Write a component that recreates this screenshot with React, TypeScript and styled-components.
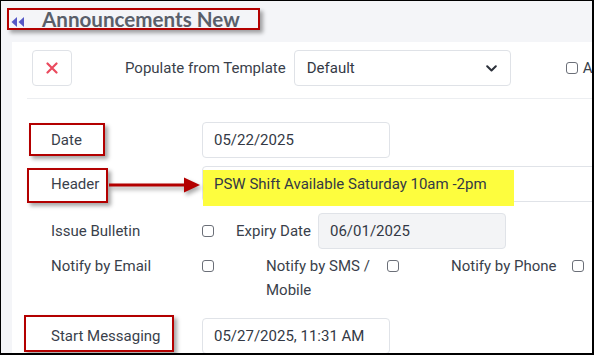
import React from "react";
import styled, { createGlobalStyle } from "styled-components";

const Global = createGlobalStyle`
  html, body { margin: 0; padding: 0; background: #fff; overflow: hidden; }
  * { box-sizing: border-box; }
`;

const Frame = styled.div`
  position: relative;
  width: 594px;
  height: 355px;
  border-top: 1px solid #000;
  border-left: 1px solid #000;
  border-right: 2px solid #000;
  border-bottom: 2px solid #000;
  overflow: hidden;
  background: #f4f5f8;
  font-family: Roboto, "Liberation Sans", sans-serif;
  font-size: 15px;
  color: #3a3f4b;
  display: flex;
  flex-direction: column;
`;

const TitleBar = styled.div`
  height: 41px;
  flex: none;
  display: flex;
  align-items: center;
  padding-left: 10px;
  gap: 17px;
`;

const Title = styled.h1`
  margin: 0;
  font-family: Lato, "Open Sans", sans-serif;
  font-weight: 700;
  font-size: 20.6px;
  line-height: 24px;
  padding-bottom: 5px;
  color: #5a5f6a;
`;

const Body = styled.div`
  flex: 1;
  display: flex;
  padding-left: 11px;
`;

const Card = styled.div`
  flex: 1;
  background: #fff;
  display: flex;
  flex-direction: column;
`;

const Toolbar = styled.div`
  display: flex;
  align-items: center;
  padding: 8px 0 0 20px;
  white-space: nowrap;
`;

const IconButton = styled.button`
  width: 40px;
  height: 36px;
  border: 1px solid #dfe2e7;
  border-radius: 4px;
  background: #fff;
  display: flex;
  align-items: center;
  justify-content: center;
  padding: 0;
  margin-right: 53px;
`;

const ToolLabel = styled.span`
  margin-right: 8px;
`;

const Select = styled.div`
  width: 217px;
  height: 36px;
  border: 1px solid #dfe2e7;
  border-radius: 4px;
  display: flex;
  align-items: center;
  justify-content: space-between;
  padding: 0 13px 0 12px;
  margin-right: 55px;
  color: #333945;
`;

const Check = styled.span<{ $mr?: number }>`
  flex: none;
  display: inline-block;
  width: 12px;
  height: 12px;
  border: 1.5px solid #6b6f78;
  border-radius: 3px;
  background: #fff;
  margin-right: ${(p) => p.$mr ?? 0}px;
`;

const Divider = styled.div`
  height: 1px;
  background: #eceef1;
  margin: 12px 0 0 15px;
`;

const Form = styled.div`
  display: flex;
  flex-direction: column;
  padding: 23px 0 0 39px;
`;

const Row = styled.div<{ $mt: number; $top?: boolean }>`
  display: flex;
  align-items: ${(p) => (p.$top ? "flex-start" : "center")};
  margin-top: ${(p) => p.$mt}px;
  min-height: 36px;
  white-space: nowrap;
`;

const Label = styled.span<{ $w: number }>`
  flex: none;
  width: ${(p) => p.$w}px;
  line-height: 24px;
  white-space: normal;
`;

const CheckWrap = styled.span<{ $mr: number }>`
  flex: none;
  height: 24px;
  display: flex;
  align-items: center;
  margin-right: ${(p) => p.$mr}px;
`;

const Input = styled.div<{ $w: number; $muted?: boolean }>`
  position: relative;
  flex: none;
  width: ${(p) => p.$w}px;
  height: 36px;
  border: 1px solid #e0e3e8;
  border-radius: 4px;
  background: ${(p) => (p.$muted ? "#f3f4f6" : "#fff")};
  display: flex;
  align-items: center;
  padding-left: 11px;
  color: #333945;
`;

const InputText = styled.span`
  position: relative;
  z-index: 2;
`;

const Highlight = styled.span`
  position: absolute;
  z-index: 1;
  left: 0;
  top: 3px;
  width: 311px;
  height: 36px;
  background: #fdfd3e;
`;

const Callout = styled.div<{ $x: number; $y: number; $w: number; $h: number }>`
  position: absolute;
  left: ${(p) => p.$x}px;
  top: ${(p) => p.$y}px;
  width: ${(p) => p.$w}px;
  height: ${(p) => p.$h}px;
  border: 2px solid #b30000;
  box-shadow: 3px 3px 4px rgba(0, 0, 0, 0.35);
  z-index: 5;
  pointer-events: none;
`;

const Arrow = styled.svg`
  position: absolute;
  left: 108px;
  top: 174px;
  z-index: 5;
  overflow: visible;
  filter: drop-shadow(2px 3px 2px rgba(0, 0, 0, 0.35));
`;

export default function App() {
  return (
    <>
      <Global />
      <Frame>
        <TitleBar>
          <svg width="14" height="10" viewBox="0 0 14 10">
            <polygon points="6,0 6,10 0.5,5" fill="#5558c6" />
            <polygon points="13,0 13,10 7.5,5" fill="#5558c6" />
          </svg>
          <Title>Announcements New</Title>
        </TitleBar>
        <Body>
          <Card>
            <Toolbar>
              <IconButton aria-label="Cancel">
                <svg width="12" height="12" viewBox="0 0 12 12">
                  <path d="M1.5 1.5 L10.5 10.5 M10.5 1.5 L1.5 10.5" stroke="#ea4a5e" strokeWidth="2.2" strokeLinecap="round" />
                </svg>
              </IconButton>
              <ToolLabel>Populate from Template</ToolLabel>
              <Select>
                <span>Default</span>
                <svg width="11" height="7" viewBox="0 0 11 7">
                  <path d="M1.2 1.2 L5.5 5.5 L9.8 1.2" stroke="#2c303a" strokeWidth="2" fill="none" strokeLinecap="round" strokeLinejoin="round" />
                </svg>
              </Select>
              <Check $mr={5} />
              <span>Active</span>
            </Toolbar>
            <Divider />
            <Form>
              <Row $mt={0}>
                <Label $w={151}>Date</Label>
                <Input $w={188}>
                  <InputText>05/22/2025</InputText>
                </Input>
              </Row>
              <Row $mt={8}>
                <Label $w={151}>Header</Label>
                <Input $w={420}>
                  <Highlight />
                  <InputText>PSW Shift Available Saturday 10am -2pm</InputText>
                </Input>
              </Row>
              <Row $mt={11}>
                <Label $w={151}>Issue Bulletin</Label>
                <CheckWrap $mr={22}>
                  <Check />
                </CheckWrap>
                <Label $w={82}>Expiry Date</Label>
                <Input $w={188} $muted>
                  <InputText>06/01/2025</InputText>
                </Input>
              </Row>
              <Row $mt={5} $top>
                <Label $w={151}>Notify by Email</Label>
                <CheckWrap $mr={52}>
                  <Check />
                </CheckWrap>
                <Label $w={121}>Notify by SMS / Mobile</Label>
                <CheckWrap $mr={52}>
                  <Check />
                </CheckWrap>
                <Label $w={121}>Notify by Phone</Label>
                <CheckWrap $mr={0}>
                  <Check />
                </CheckWrap>
              </Row>
              <Row $mt={16}>
                <Label $w={151}>Start Messaging</Label>
                <Input $w={188}>
                  <InputText>05/27/2025, 11:31 AM</InputText>
                </Input>
              </Row>
            </Form>
          </Card>
        </Body>
        <Callout $x={6} $y={7} $w={253} $h={22} />
        <Callout $x={28} $y={122} $w={76} $h={33} />
        <Callout $x={26} $y={167} $w={81} $h={35} />
        <Callout $x={23} $y={314} $w={150} $h={37} />
        <Arrow width="92" height="20" viewBox="0 0 92 20">
          <rect x="0" y="8.5" width="77" height="3" fill="#b30000" />
          <polygon points="75,2.5 91,10 75,17.5" fill="#b30000" />
        </Arrow>
      </Frame>
    </>
  );
}
